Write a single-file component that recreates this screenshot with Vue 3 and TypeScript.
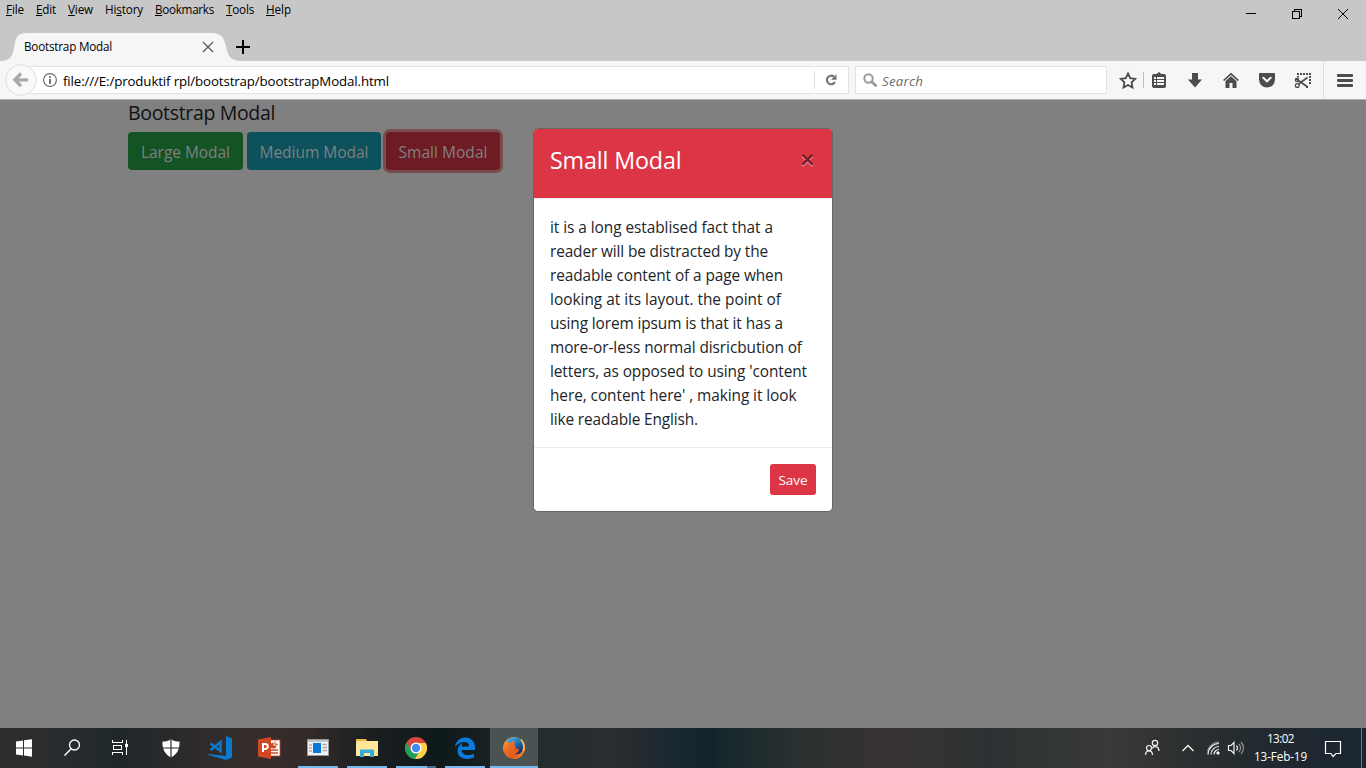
<script setup lang="ts">
interface Label {
  text: string
  width: number
}
interface MenuItem {
  before: string
  key: string
  after: string
  width: number
}
interface TaskApp {
  name: string
  state: '' | 'open' | 'multi' | 'active'
}

const menu: MenuItem[] = [
  { before: '', key: 'F', after: 'ile', width: 18 },
  { before: '', key: 'E', after: 'dit', width: 20 },
  { before: '', key: 'V', after: 'iew', width: 25 },
  { before: 'Hi', key: 's', after: 'tory', width: 38 },
  { before: '', key: 'B', after: 'ookmarks', width: 59 },
  { before: '', key: 'T', after: 'ools', width: 28 },
  { before: '', key: 'H', after: 'elp', width: 25 },
]

const lines: Label[] = [
  { text: 'it is a long establised fact that a', width: 223 },
  { text: 'reader will be distracted by the', width: 218 },
  { text: 'readable content of a page when', width: 233 },
  { text: 'looking at its layout. the point of', width: 231 },
  { text: 'using lorem ipsum is that it has a', width: 233 },
  { text: 'more-or-less normal disricbution of', width: 252 },
  { text: "letters, as opposed to using 'content", width: 257 },
  { text: "here, content here' , making it look", width: 246.5 },
  { text: 'like readable English.', width: 148 },
]

const apps: TaskApp[] = [
  { name: 'shield', state: '' },
  { name: 'code', state: '' },
  { name: 'slides', state: '' },
  { name: 'window', state: 'open' },
  { name: 'folder', state: 'open' },
  { name: 'chrome', state: 'multi' },
  { name: 'edge', state: 'open' },
  { name: 'firefox', state: 'active' },
]

// Tracks a label out or in so that it takes the given width.
const vFit = {
  mounted(el: HTMLElement, binding: { value: number }) {
    const natural = el.getBoundingClientRect().width
    const count = (el.textContent ?? '').length
    if (count > 0) el.style.letterSpacing = `${(binding.value - natural) / count}px`
  },
}
</script>

<template>
  <div class="screen">
    <header class="titlebar">
      <nav class="menu">
        <span v-for="m in menu" :key="m.key + m.after" class="menu-cell" :style="{ width: m.width + 'px' }">
          <span v-fit="m.width" class="t">{{ m.before }}<u>{{ m.key }}</u>{{ m.after }}</span>
        </span>
      </nav>
      <div class="winctl">
        <svg width="120" height="28" viewBox="0 0 120 28" fill="none" stroke="#000" shape-rendering="crispEdges">
          <path d="M0 13.500h10M46.500 11.500h7v7h-7zM48.500 11v-1.500h7v7h-2" />
          <path d="M92 9l10 10M102 9l-10 10" shape-rendering="auto" />
        </svg>
      </div>
      <div class="tabs">
        <div class="tab">
          <svg class="tab-shape" width="240" height="28" viewBox="0 0 240 28">
            <path d="M0 28C9 28 12 25 14 15C15.500 5 17 0 27 0H212C221 0 224 5 226 13C228 23 230 27 240 28Z" fill="#f6f6f6" />
          </svg>
          <span v-fit="88" class="tab-title">Bootstrap Modal</span>
          <svg class="tab-close" width="12" height="12" viewBox="0 0 12 12" stroke="#555" stroke-width="1.200">
            <path d="M1 1l10 10M11 1L1 11" />
          </svg>
        </div>
        <svg class="plus" width="14" height="14" viewBox="0 0 14 14"><path d="M0 6h6V0h2v6h6v2H8v6H6V8H0z" fill="#000" /></svg>
      </div>
    </header>

    <div class="toolbar">
      <div class="back">
        <svg width="32" height="32" viewBox="0 0 32 32">
          <circle cx="16" cy="16" r="15.300" fill="#f9f9f9" stroke="#dfdfdf" />
          <path d="M16 9.500L9.800 15.800L16 22.200M10.500 15.800H23" fill="none" stroke="#a9a9a9" stroke-width="3.300" />
        </svg>
      </div>
      <div class="urlbar">
        <svg class="info" width="14" height="14" viewBox="0 0 14 14">
          <circle cx="7" cy="7" r="6.400" fill="none" stroke="#666" stroke-width="1.100" />
          <path d="M6.100 3.200h1.800v1.700H6.100zM6.100 6h1.800v5H6.100z" fill="#666" />
        </svg>
        <span v-fit="326" class="url">file:///E:/produktif rpl/bootstrap/bootstrapModal.html</span>
        <div class="reload">
          <svg width="12" height="12" viewBox="0 0 12 12">
            <path d="M9 2.700A4.300 4.300 0 1 0 10 8" fill="none" stroke="#737373" stroke-width="2.100" />
            <path d="M11.500 .2V5.700H6z" fill="#737373" />
          </svg>
        </div>
      </div>
      <div class="search">
        <svg width="15" height="15" viewBox="0 0 15 15" fill="none" stroke="#999">
          <circle cx="5.500" cy="5.500" r="4.200" stroke-width="2" /><path d="M8.500 8.500l5 4.800" stroke-width="2.700" />
        </svg>
        <span v-fit="41" class="t hint">Search</span>
      </div>
      <div class="tools">
        <svg width="266" height="38" viewBox="1100 61 266 38" fill="#4c4c4c">
          <path d="M1128 73.500l2.200 4.600 5 .7-3.600 3.600.9 5.100-4.500-2.500-4.500 2.500.9-5.100-3.600-3.600 5-.7z" fill="none" stroke="#4c4c4c" stroke-width="1.800" />
          <path d="M1143 72h1v16h-1z" fill="#bdbdbd" />
          <path d="M1154 74h2.500l2.500-2 2.500 2h2.500a2 2 0 0 1 2 2v10a2 2 0 0 1-2 2h-10a2 2 0 0 1-2-2V76a2 2 0 0 1 2-2z" />
          <path d="M1154 77h2v2h-2zM1157 77h7v2h-7zM1154 80h2v2h-2zM1157 80h7v2h-7zM1154 83h2v2h-2zM1157 83h7v2h-7z" fill="#f6f6f6" />
          <path d="M1192 73h6v6.500h4l-7 8-7-8h4z" />
          <path d="M1231 72.800l8 7.200-1.200 1-6.800-6-6.800 6-1.200-1z" />
          <path d="M1231 76.200l5.500 4.800v7h-4v-5h-3v5h-4v-7z" />
          <path d="M1260 73h14a1 1 0 0 1 1 1v5.500a8 8 0 0 1-16 0V74a1 1 0 0 1 1-1z" />
          <path d="M1263.300 77.800l3.700 3.500 3.700-3.500" fill="none" stroke="#f6f6f6" stroke-width="2" stroke-linecap="round" />
          <path d="M1297 73h2v2h-2zM1300 73h2v2h-2zM1303 73h2v2h-2zM1306 73h2v2h-2zM1309 73h2v2h-2zM1309 76h2v2h-2zM1309 79h2v2h-2zM1309 82h2v2h-2zM1306 86h2v2h-2zM1297 76h2v1.500h-2z" />
          <g fill="none" stroke="#4c4c4c"><path d="M1307.500 77.500l-9 6.500M1295.500 78.500l11.500 8" stroke-width="1.700" /><circle cx="1297.300" cy="85.500" r="1.900" stroke-width="1.300" /><circle cx="1297" cy="80" r="1.700" stroke-width="1.200" /></g>
          <path d="M1323 61h1v38h-1z" fill="#dedede" />
          <rect x="1337" y="74" width="16" height="3" rx="1" /><rect x="1337" y="79" width="16" height="3" rx="1" /><rect x="1337" y="84" width="16" height="3" rx="1" />
        </svg>
      </div>
    </div>

    <main class="page">
      <h5><span v-fit="147" class="t">Bootstrap Modal</span></h5>
      <div class="buttons">
        <button class="btn green"><span v-fit="89" class="t">Large Modal</span></button>
        <button class="btn teal"><span v-fit="109" class="t">Medium Modal</span></button>
        <button class="btn red"><span v-fit="89" class="t">Small Modal</span></button>
      </div>
      <section class="modal">
        <div class="modal-head">
          <h4><span v-fit="131.5" class="t">Small Modal</span></h4>
          <svg class="close" width="13" height="14" viewBox="0 0 13 14" fill="none" stroke-width="2.300">
            <path d="M1.500 3l10 10M11.500 3l-10 10" stroke="#ed9aa2" /><path d="M1.500 1.700l10 10M11.500 1.700l-10 10" stroke="#6e1b23" />
          </svg>
        </div>
        <div class="modal-body">
          <div v-for="l in lines" :key="l.text" class="line"><span v-fit="l.width" class="t">{{ l.text }}</span></div>
        </div>
        <div class="modal-foot"><button class="save"><span v-fit="29" class="t">Save</span></button></div>
      </section>
    </main>

    <footer class="taskbar">
      <div class="sys">
        <svg width="144" height="40" viewBox="0 728 144 40">
          <path d="M16 741.500l7-1v7h-7zM24 740.300l8-1.100v8.300h-8zM16 748.500h7v7l-7-1zM24 748.500h8v8.200l-8-1.100z" fill="#fff" />
          <g fill="none" stroke="#fff"><circle cx="74.500" cy="745" r="5" stroke-width="1.300" /><path d="M71 749l-6.500 6.500" stroke-width="1.500" /></g>
          <path d="M112.500 740v2.500h10V740M112.500 755v-2.500h10v2.500M113.500 745.500h8v4h-8zM126.500 740v15" fill="none" stroke="#fff" shape-rendering="crispEdges" />
          <path d="M125 744h3v3h-3z" fill="#fff" />
        </svg>
      </div>
      <div v-for="a in apps" :key="a.name" class="app" :class="a.state">
        <svg v-if="a.name === 'shield'" width="24" height="24" viewBox="0 0 24 24">
          <path d="M12 3c2 2 5 2.500 8.500 2.500C21 13 18 18.500 12 21.500C6 18.500 3 13 3.500 5.500C7 5.500 10 5 12 3z" fill="#fff" /><path d="M12 3v19M3 12h18" stroke="#2c2929" stroke-width="1.200" />
        </svg>
        <svg v-else-if="a.name === 'code'" width="24" height="24" viewBox="0 0 24 24">
          <path d="M18 0l6 2.500v19L18 24 .5 19v-1L18 20z" fill="#0b7bd0" /><path d="M2.500 7.500l10 7.500V6L2.500 14" fill="none" stroke="#0b7bd0" stroke-width="2.500" />
        </svg>
        <svg v-else-if="a.name === 'slides'" width="24" height="24" viewBox="0 0 24 24">
          <path d="M12 4h11v16H12z" fill="#fff" stroke="#d24726" stroke-width=".8" /><path d="M14 14h7M14 17h7" stroke="#d24726" stroke-width="1.300" /><path d="M16.500 6.500a3 3 0 1 0 3 3h-3z" fill="#d24726" /><path d="M18 5.500v2.800h3" fill="none" stroke="#d24726" />
          <path d="M1 3.500L14 1v22L1 20.500z" fill="#d24726" /><path d="M6 16V8h2.300a2.500 2.500 0 0 1 0 5H6" fill="none" stroke="#fff" stroke-width="2" />
        </svg>
        <svg v-else-if="a.name === 'window'" width="24" height="24" viewBox="0 0 24 24">
          <path d="M1.500 3.500h21v16h-21z" fill="#f3f3f3" stroke="#999" /><path d="M2 4h20v2H2z" fill="#bfc4c8" /><path d="M7 7h8v10H7z" fill="#0878d8" /><path d="M16.500 8.500H21M16.500 11.500H21M16.500 14.500H21M3 9h3M3 12h3M3 15h3" stroke="#aaa" stroke-width="1.300" />
        </svg>
        <svg v-else-if="a.name === 'folder'" width="24" height="24" viewBox="0 0 24 24">
          <path d="M1 3h10l1 2h10v15H1z" fill="#e8ba44" /><path d="M2 5h21v15H1V8z" fill="#ffe69a" /><path d="M5 21v-7.500h14V21h-4v-4H9v4z" fill="#35addc" />
        </svg>
        <svg v-else-if="a.name === 'chrome'" width="24" height="24" viewBox="0 0 24 24">
          <circle cx="12" cy="12" r="11" fill="#d9473c" /><path d="M2.500 6.500A11 11 0 0 0 11 23l5-8.500L8 15z" fill="#23a05b" /><path d="M12 7h9.800A11 11 0 0 1 11 23l5.300-8.500z" fill="#fdd04b" /><circle cx="12" cy="12" r="5.500" fill="#fff" /><circle cx="12" cy="12" r="4.200" fill="#4688ef" />
        </svg>
        <svg v-else-if="a.name === 'edge'" width="24" height="24" viewBox="0 0 24 24">
          <path d="M2 11C3 4.500 7.500 1.500 12.500 1.500C18.500 1.500 22 6 22 11.500V14H8.500C9 18 12 19 15 19C17.500 19 19.500 18.300 21 17.400V21.300C19 22.500 16.500 23 14 23C8 23 4.500 19.500 4.500 14.800C4.500 11 7 8.300 10 7C9 8.300 8.600 9.500 8.500 10.500H16C16 7.500 14.500 6 11.500 6C7.500 6 4 8 2 11z" fill="#087bdc" />
        </svg>
        <svg v-else width="24" height="24" viewBox="0 0 24 24">
          <defs>
            <linearGradient id="fox" x1="0" y1="0" x2="1" y2="1"><stop offset="0" stop-color="#f4b04a" /><stop offset=".4" stop-color="#ea6a22" /><stop offset=".7" stop-color="#e2591c" /><stop offset="1" stop-color="#f7a832" /></linearGradient>
            <linearGradient id="globe" x1="0" y1="0" x2=".6" y2="1"><stop offset="0" stop-color="#4cc0ee" /><stop offset=".5" stop-color="#1f78bd" /><stop offset="1" stop-color="#12306e" /></linearGradient>
          </defs>
          <circle cx="12" cy="12" r="11" fill="url(#fox)" />
          <path d="M4.500 5C8 .2 15.500 0 19.500 4.500C21.500 8 21.500 12 20 15C18.500 17.700 15.500 18.800 12.800 18C16 17.300 17.500 14.500 16.500 12.500C15.500 13 14.500 13 13 12.300C14.500 11.500 14 10.300 12.800 9.700C12 8 12.300 6 13.500 5.200C11.500 4.800 10 5.600 9 7C7.500 6.400 6 6.300 4.500 5z" fill="url(#globe)" />
          <path d="M19 3.500C22 7 22.800 11 21.300 15" fill="none" stroke="#f9cf55" stroke-width="1.500" />
        </svg>
      </div>
      <div class="tray">
        <svg width="110" height="40" viewBox="1140 728 110 40" fill="none" stroke="#f2f2f2" stroke-width="1.200">
          <circle cx="1155" cy="743" r="2.700" /><circle cx="1149" cy="748" r="2.500" /><path d="M1145.500 755c0-5.500 7-5.500 7 0M1152 748.500c2-3 7-2.500 7 2.500" />
          <path d="M1182.500 751l5.500-5.500 5.500 5.500" stroke-width="1.400" />
          <path d="M1208 754.500a11 11 0 0 1 11-11M1211 754.500a8 8 0 0 1 8-8M1214 754.500a5 5 0 0 1 5-5" /><path d="M1217 752h2v2h-2z" fill="#fff" stroke-width="1" /><path d="M1207.500 751a13 13 0 0 1 11.500-9" stroke="#999" />
          <path d="M1228.500 745.500h2.500l3-3v11l-3-3h-2.500z" /><path d="M1236.500 745.500q2 2.500 0 5" /><path d="M1238.800 743.800q3.500 4.200 0 8.400M1241 742q5 6 0 12" stroke="#909393" />
        </svg>
        <div class="clock"><div><span v-fit="27" class="t">13:02</span></div><div><span v-fit="53" class="t">13-Feb-19</span></div></div>
        <svg class="note" width="18" height="18" viewBox="0 0 18 18"><path d="M1.500 1.500h15v12H12l-3 3-2-3H1.500z" fill="none" stroke="#fff" stroke-width="1.200" /></svg>
        <div class="desktop"></div>
      </div>
    </footer>
  </div>
</template>

<style>
html, body { margin: 0; overflow: hidden; }
</style>

<style scoped>
.screen { width: 1366px; height: 768px; display: flex; flex-direction: column; overflow: hidden; font-family: "Open Sans", "Noto Sans", sans-serif; background: #808080; }
.screen * { box-sizing: border-box; }
svg { display: block; flex: none; }
.t { display: inline-block; white-space: pre; }
.titlebar { height: 61px; background: #c7c7c7; display: grid; grid-template-columns: 1fr 120px; grid-template-rows: 33px 28px; flex: none; }
.menu { display: flex; gap: 12px; padding-left: 6px; font-size: 11.7px; line-height: 18px; color: #000; white-space: nowrap; }
.menu u { text-underline-offset: 1px; text-decoration-thickness: 1px; }
.winctl { width: 120px; height: 28px; }
.tabs { grid-column: 1 / 3; display: flex; align-items: center; }
.tab { position: relative; width: 236px; height: 28px; display: flex; align-items: center; padding-left: 24px; }
.tab-shape { position: absolute; left: 0; top: 0; }
.tab-title { position: relative; padding-bottom: 2px; font-size: 11.7px; line-height: 26px; color: #000; white-space: nowrap; }
.tab-close { position: relative; margin-left: 90px; }
.plus { flex: none; }
.toolbar { height: 39px; flex: none; background: #f6f6f6; border-bottom: 1px solid #b0b0b0; display: flex; align-items: center; }
.back { width: 32px; margin-left: 5px; z-index: 1; }
.urlbar { width: 821px; height: 28px; margin-left: -9px; background: #fff; border: 1px solid #e2e2e2; display: flex; align-items: center; padding-left: 14px; }
.url { margin-left: 6px; padding-top: 2px; font-size: 13.3px; line-height: 24px; color: #000; white-space: nowrap; }
.reload { margin-left: auto; width: 34px; height: 18px; border-left: 1px solid #dedede; display: flex; align-items: center; padding-left: 10px; }
.search { width: 252px; height: 28px; margin-left: 6px; border: 1px solid #e2e2e2; background: #fff; display: flex; align-items: center; padding-left: 7px; gap: 4px; font-size: 13.3px; font-style: italic; line-height: 24px; color: #6c6c6c; }
.hint { padding-top: 2px; }
.tools { margin-left: -7px; width: 266px; }
.page { position: relative; flex: 1; background: #808080; padding-left: 128px; }
h5, h4 { margin: 0; font-weight: 400; }
h5 { font-size: 19.5px; line-height: 24px; height: 32px; padding-top: 1px; color: #101214; }
.buttons { display: flex; gap: 4px; }
.btn { height: 38px; width: 115px; border: 0; border-radius: 4px; padding: 1px 0 0; font-family: inherit; font-size: 15.5px; line-height: 24px; color: #808080; white-space: nowrap; }
.green { background: #145323; }
.teal { background: #0c515c; width: 134px; }
.red { background: #6e1b23; box-shadow: 0 0 0 3px #774d51; margin-left: 1px; width: 114px; }
.modal { position: absolute; left: 533px; top: 28px; width: 300px; height: 384px; border: 1px solid #666; border-radius: 5px; background: #fff; overflow: hidden; }
.modal-head { height: 70px; background: #dc3545; border-bottom: 1px solid #e9ecef; display: flex; justify-content: space-between; padding: 14px 18px 0 16px; }
h4 { font-size: 23.3px; line-height: 34px; color: #fff; }
.close { margin-top: 10px; }
.modal-body { padding: 17px 16px 15px; height: 248px; color: #212529; font-size: 15.4px; }
.line { height: 24px; line-height: 24px; white-space: nowrap; }
.modal-foot { border-top: 1px solid #e9ecef; height: 64px; padding: 16px; display: flex; justify-content: flex-end; }
.save { width: 46px; height: 31px; border: 0; border-radius: 3px; background: #dc3545; color: #fff; padding: 1px 0 0; font-family: inherit; font-size: 13.5px; line-height: 21px; }
.taskbar { height: 40px; flex: none; display: flex; color: #fff; background: linear-gradient(90deg, #2e2d2e 0, #292c2e 60px, #1f272b 120px, #2c2a2b 180px, #362e2d 250px, #322b2a 310px, #1b1f20 370px, #0e191b 440px, #182123 490px, #252e2e 550px, #2a2d30 620px, #1b2830 665px, #12242b 710px, #1e2b2e 750px, #2a3131 800px, #383332 890px, #2c3233 990px, #393939 1110px, #2c2f30 1190px, #222a2f 1260px, #1b2630 1366px); }
.sys { width: 146px; }
.app { width: 49px; height: 40px; display: flex; align-items: center; justify-content: center; background: no-repeat center bottom / 40px 2px; }
.open { background-image: linear-gradient(#76b9ed, #76b9ed); }
.multi { background-image: linear-gradient(90deg, #76b9ed 31px, #486d8b 31px); }
.active { width: 48px; margin-left: 1px; background: linear-gradient(#4b5253, #4b5253) no-repeat; border-bottom: 2px solid #76b9ed; padding-top: 1px; }
.tray { margin-left: auto; display: flex; align-items: center; }
.clock { width: 62px; padding-right: 1px; font-size: 11.7px; line-height: 18px; text-align: center; height: 38px; white-space: nowrap; }
.note { margin-left: 12px; margin-top: 1px; }
.desktop { margin-left: 19px; width: 5px; height: 40px; border-left: 1px solid #737a7e; }
</style>
